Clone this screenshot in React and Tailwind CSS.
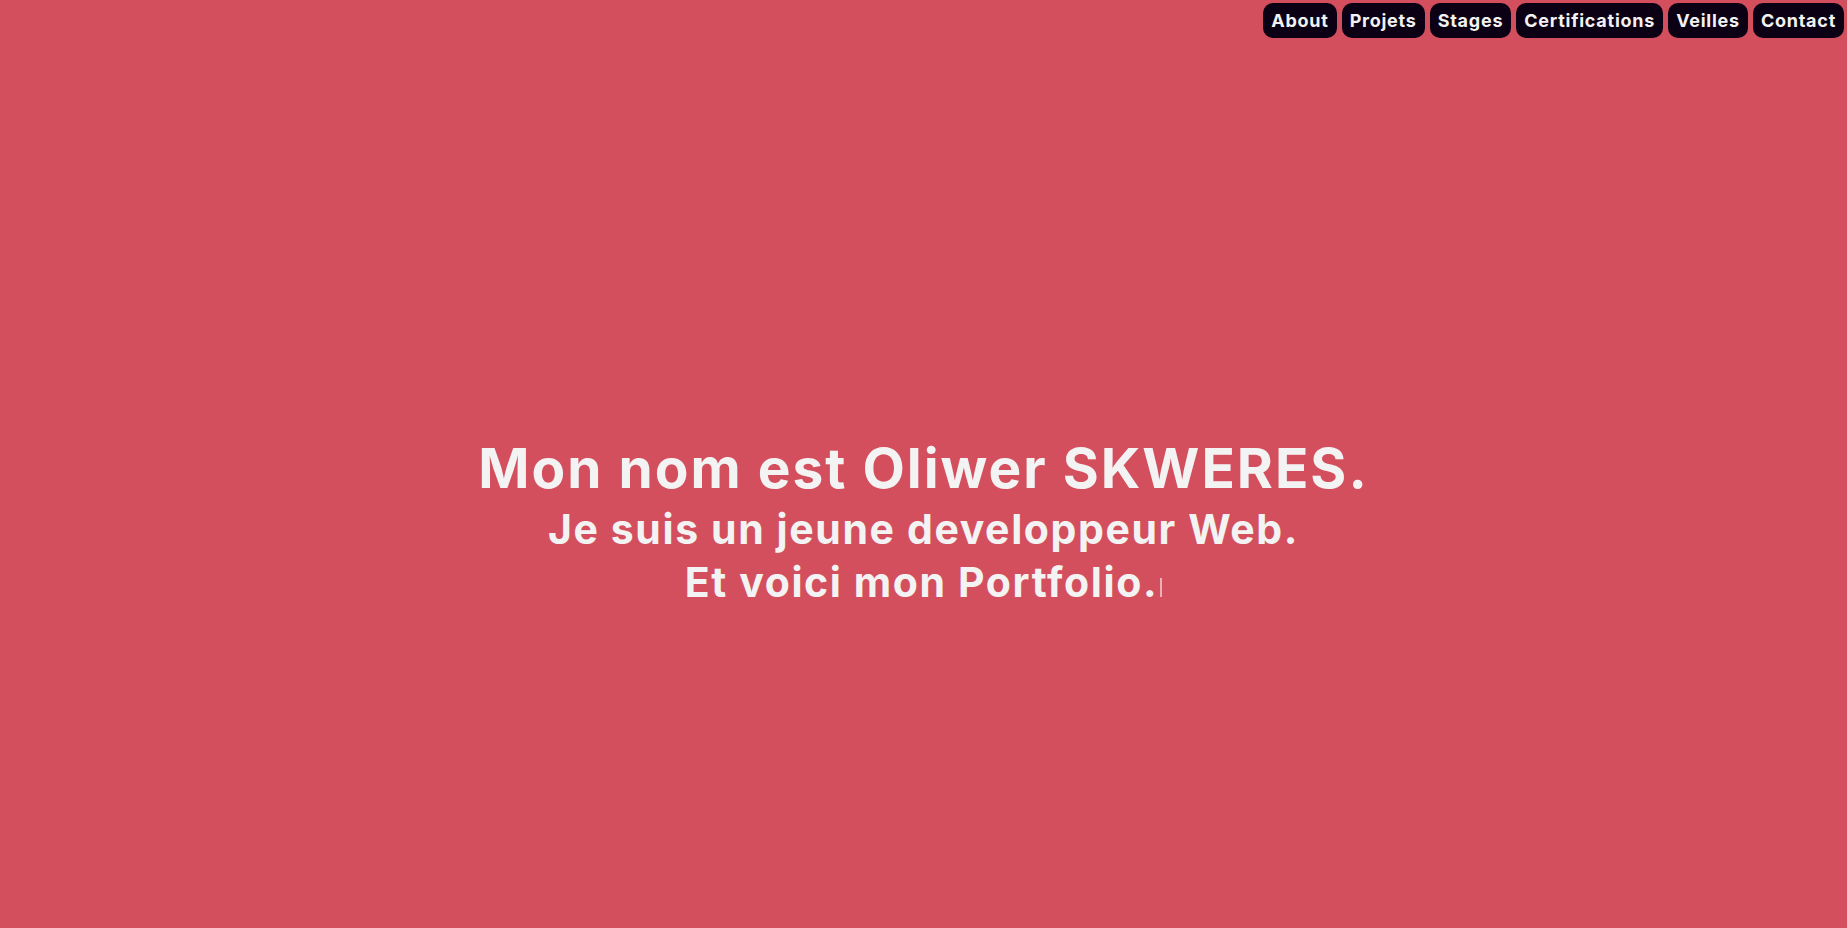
const NAV_LINKS = ['About', 'Projets', 'Stages', 'Certifications', 'Veilles', 'Contact']

function NavBar() {
  return (
    <header className="flex justify-end gap-[5px] pt-[3px] pr-[3px]">
      {NAV_LINKS.map(label => (
        <a
          key={label}
          href={`#${label.toLowerCase()}`}
          className="h-[35px] px-[8px] flex items-center rounded-[10px] bg-[#0c0114] text-[#f2f2f2] text-[18px] font-bold tracking-[0.75px]"
        >
          {label}
        </a>
      ))}
    </header>
  )
}

export default function App() {
  return (
    <div
      className="h-[928px] bg-[#d44f5d] overflow-hidden flex flex-col"
      style={{ fontFamily: 'Inter, "Noto Sans", sans-serif' }}
    >
      <NavBar />

      {/* Hero */}
      <main className="flex flex-col items-center pt-[401px] text-[#f3f3f3] font-bold text-center">
        <h1 className="text-[55px] leading-[58px] tracking-[2px]">Mon nom est Oliwer SKWERES.</h1>
        <p className="mt-[6px] text-[41px] leading-[53px] tracking-[1.6px]">Je suis un jeune developpeur Web.</p>
        <p className="text-[41px] leading-[53px] tracking-[1.6px]">
          Et voici mon Portfolio.
          <span className="inline-block w-[2px] h-[19px] ml-[2px] bg-[#f3f3f3]/60 align-baseline" />
        </p>
      </main>
    </div>
  )
}
